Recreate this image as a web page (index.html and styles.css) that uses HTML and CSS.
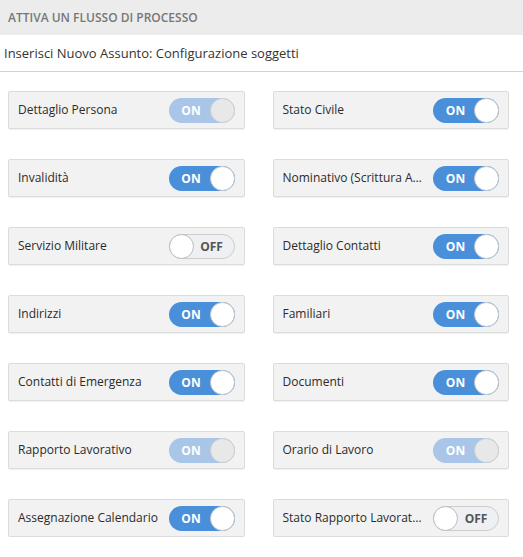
FILE: index.html
```html
<!DOCTYPE html>
<html lang="it">
<head>
<meta charset="utf-8">
<title>Attiva un flusso di processo</title>
<link rel="stylesheet" href="styles.css">
</head>
<body>
<div class="header">ATTIVA UN FLUSSO DI PROCESSO</div>
<div class="subtitle">Inserisci Nuovo Assunto: Configurazione soggetti</div>
<div class="grid">
  <div class="card"><span class="label">Dettaglio Persona</span><span class="toggle on disabled"><span class="txt">ON</span><span class="knob"></span></span></div>
  <div class="card"><span class="label">Stato Civile</span><span class="toggle on"><span class="txt">ON</span><span class="knob"></span></span></div>
  <div class="card"><span class="label">Invalidità</span><span class="toggle on"><span class="txt">ON</span><span class="knob"></span></span></div>
  <div class="card"><span class="label">Nominativo (Scrittura Alternativa)</span><span class="toggle on"><span class="txt">ON</span><span class="knob"></span></span></div>
  <div class="card"><span class="label">Servizio Militare</span><span class="toggle off"><span class="knob"></span><span class="txt">OFF</span></span></div>
  <div class="card"><span class="label">Dettaglio Contatti</span><span class="toggle on"><span class="txt">ON</span><span class="knob"></span></span></div>
  <div class="card"><span class="label">Indirizzi</span><span class="toggle on"><span class="txt">ON</span><span class="knob"></span></span></div>
  <div class="card"><span class="label">Familiari</span><span class="toggle on"><span class="txt">ON</span><span class="knob"></span></span></div>
  <div class="card"><span class="label">Contatti di Emergenza</span><span class="toggle on"><span class="txt">ON</span><span class="knob"></span></span></div>
  <div class="card"><span class="label">Documenti</span><span class="toggle on"><span class="txt">ON</span><span class="knob"></span></span></div>
  <div class="card"><span class="label">Rapporto Lavorativo</span><span class="toggle on disabled"><span class="txt">ON</span><span class="knob"></span></span></div>
  <div class="card"><span class="label">Orario di Lavoro</span><span class="toggle on disabled"><span class="txt">ON</span><span class="knob"></span></span></div>
  <div class="card"><span class="label">Assegnazione Calendario</span><span class="toggle on"><span class="txt">ON</span><span class="knob"></span></span></div>
  <div class="card"><span class="label">Stato Rapporto Lavorativo</span><span class="toggle off"><span class="knob"></span><span class="txt">OFF</span></span></div>
</div>
</body>
</html>
```

FILE: styles.css
```css
html, body {
  margin: 0;
  padding: 0;
  background: #ffffff;
  font-family: "Open Sans", "Liberation Sans", sans-serif;
}

.header {
  height: 35px;
  background: #ececec;
  color: #777777;
  font-size: 12px;
  font-weight: 600;
  line-height: 35px;
  padding-left: 8px;
}

.subtitle {
  height: 37px;
  line-height: 36px;
  padding-left: 4px;
  font-size: 13px;
  color: #333333;
  border-bottom: 1px solid #d2d2d2;
  box-sizing: border-box;
}

.grid {
  display: grid;
  grid-template-columns: minmax(0, 1fr) minmax(0, 1fr);
  column-gap: 28px;
  row-gap: 30px;
  padding: 19px 14px 0 8px;
}

.card {
  min-width: 0;
  height: 38px;
  box-sizing: border-box;
  background: #f2f2f2;
  border: 1px solid #dcdcdc;
  border-radius: 2px;
  box-shadow: 0 1px 1px rgba(0, 0, 0, 0.06);
  display: flex;
  align-items: center;
  justify-content: space-between;
  padding: 0 9px 0 9px;
  gap: 10px;
}

.label {
  font-size: 12px;
  color: #2b2b2b;
  white-space: nowrap;
  overflow: hidden;
  text-overflow: ellipsis;
  min-width: 0;
  padding-bottom: 1px;
}

.toggle {
  flex: 0 0 auto;
  width: 66px;
  height: 25px;
  box-sizing: border-box;
  border-radius: 13px;
  display: flex;
  align-items: center;
  font-size: 12px;
  font-weight: 700;
}

.toggle .knob {
  width: 25px;
  height: 25px;
  box-sizing: border-box;
  border-radius: 50%;
  background: #ffffff;
  border: 1px solid #c8c8c8;
  flex: 0 0 auto;
}

.toggle .txt {
  flex: 1 1 auto;
  text-align: center;
}

.toggle.on {
  background: #4a8fd9;
  color: #ffffff;
}

.toggle.on .txt {
  padding-left: 4px;
}

.toggle.on.disabled {
  background: #a9c6e8;
}

.toggle.on.disabled .knob {
  background: #e8e8e8;
  border-color: #d0d0d0;
}

.toggle.off {
  background: #eef0f3;
  border: 1px solid #cccccc;
  color: #555555;
}

.toggle.off .knob {
  margin-left: -1px;
  height: 25px;
  width: 25px;
  border-color: #bbbbbb;
}

.toggle.off .txt {
  padding-right: 4px;
}
```
